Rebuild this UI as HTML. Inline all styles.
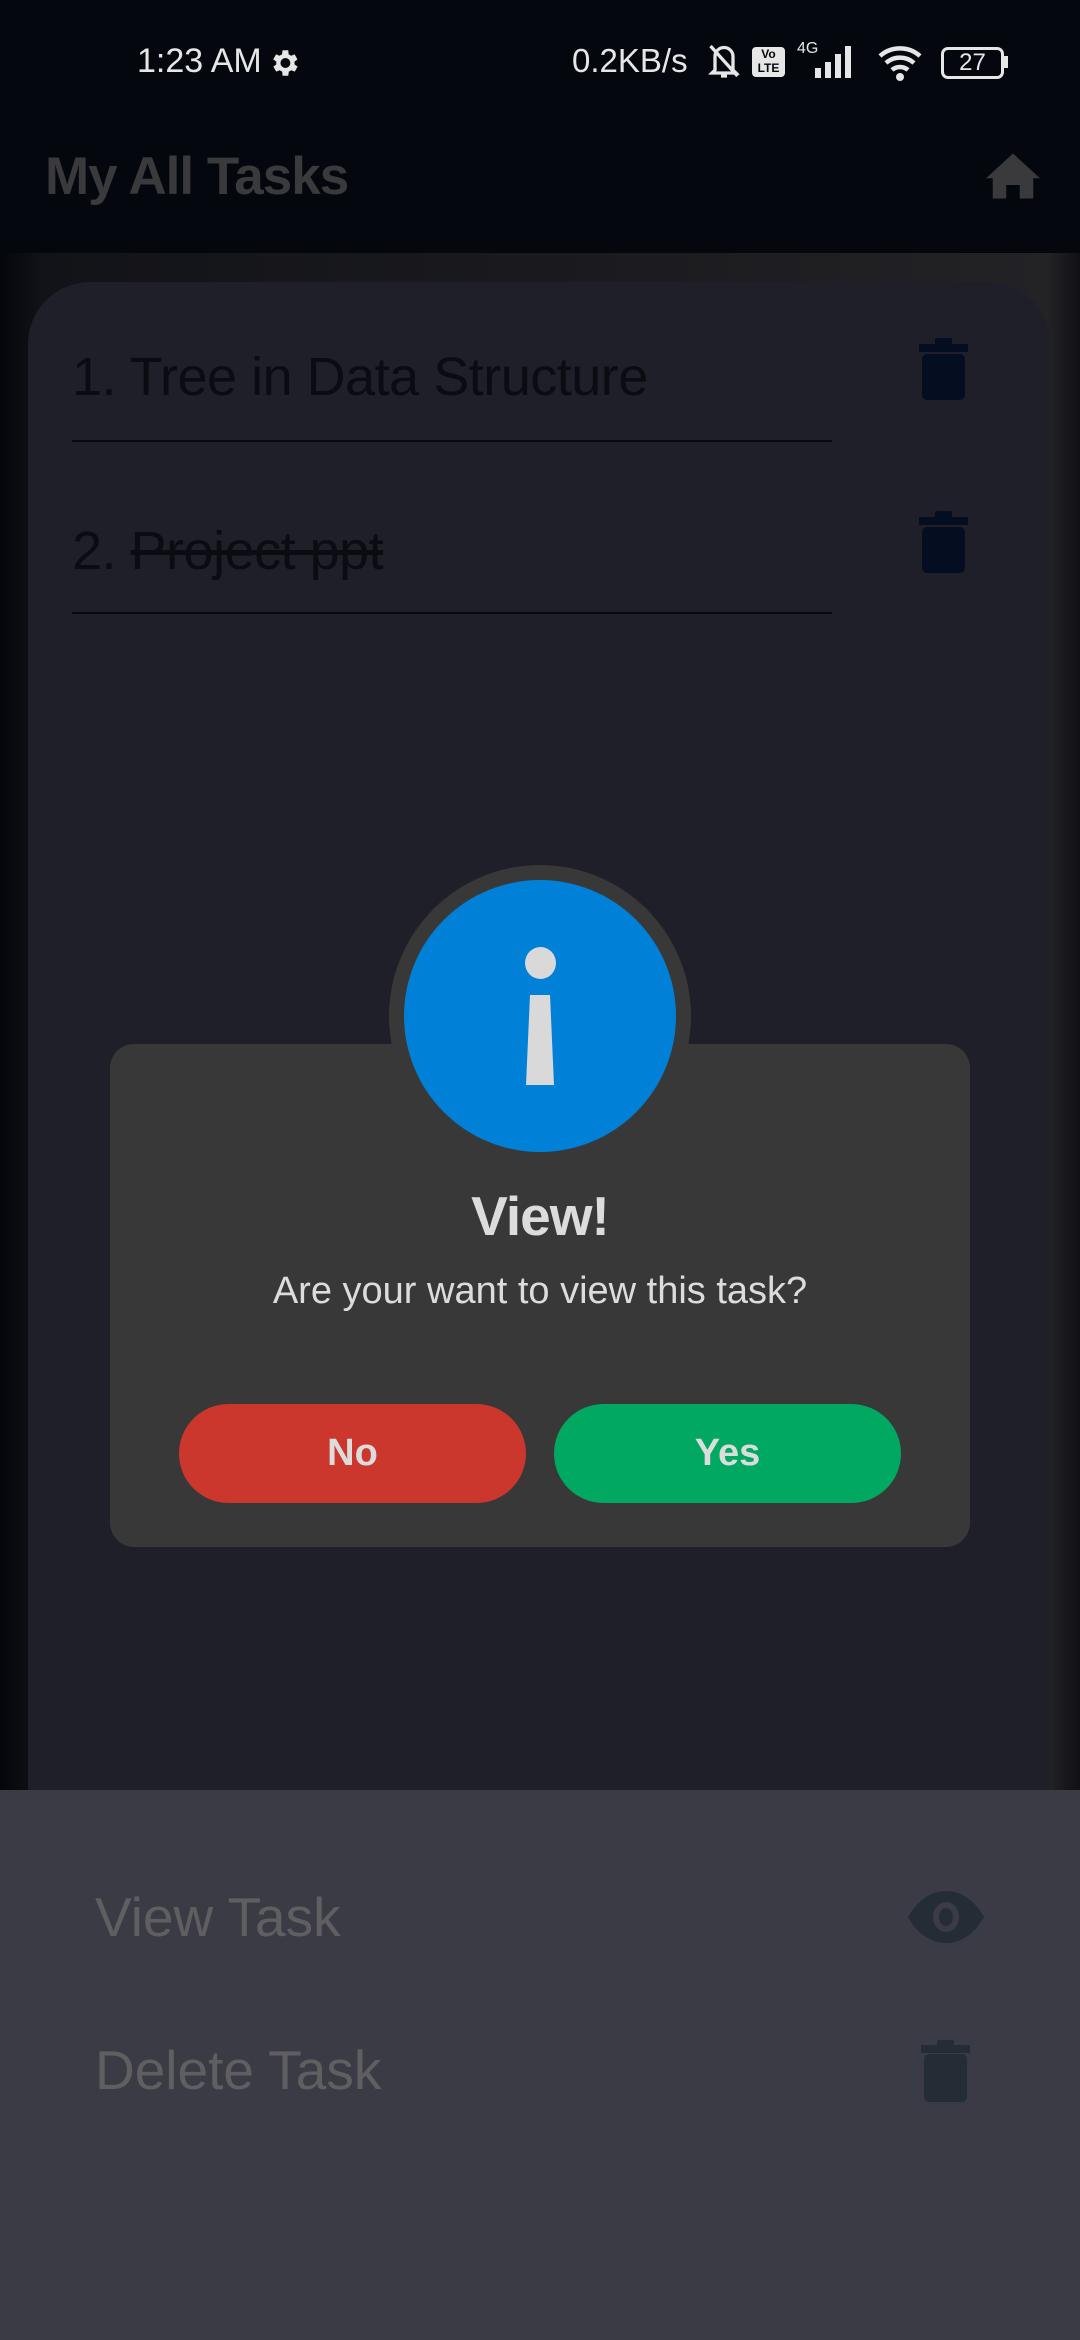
<!DOCTYPE html>
<html><head><meta charset="utf-8"><style>
*{margin:0;padding:0;box-sizing:border-box}
body{width:1080px;height:2340px;position:relative;overflow:hidden;background:#05070f;font-family:"Liberation Sans",Roboto,sans-serif}
.a{position:absolute}
.bg{left:0;top:253px;width:1080px;height:1540px;background:linear-gradient(90deg,#05060c 0%,#121318 4%,#1a1a1e 50%,#232326 97%,#101015 100%)}
.card{left:28px;top:282px;width:1022px;height:1600px;background:#1e1f28;border-radius:62px 62px 0 0}
.t{color:#0b0c12;font-size:54px;white-space:nowrap;letter-spacing:-0.5px}
.line{height:2px;background:#08090e;left:72px;width:760px}
.sheet{left:0;top:1790px;width:1080px;height:550px;background:#3b3b45}
.st{color:#5f5f61;font-size:55px;left:95px;white-space:nowrap}
</style></head><body>
<div class="a" style="left:137px;top:42px;color:#e6e6e6;font-size:34px">1:23 AM</div>
<svg class="a" style="left:267px;top:46px" width="34" height="34" viewBox="0 0 24 24"><path fill="#e6e6e6" d="M19.4 13a7 7 0 000-2l2.1-1.6-2-3.5-2.5 1a7 7 0 00-1.7-1L15 3h-4l-.4 2.9a7 7 0 00-1.7 1l-2.5-1-2 3.5L6.6 11a7 7 0 000 2l-2.1 1.6 2 3.5 2.5-1a7 7 0 001.7 1L11 21h4l.4-2.9a7 7 0 001.7-1l2.5 1 2-3.5zM13 15.5a3.5 3.5 0 110-7 3.5 3.5 0 010 7z"/></svg>
<div class="a" style="left:572px;top:42px;color:#e6e6e6;font-size:33px">0.2KB/s</div>
<svg class="a" style="left:706px;top:40px" width="36" height="42" viewBox="0 0 24 28"><path d="M6 20V11a6 6 0 0112 0v9l2 2H4zM10 24h4M3 4l18 20" stroke="#e6e6e6" stroke-width="2.2" fill="none"/></svg>
<div class="a" style="left:752px;top:47px;width:33px;height:30px;background:#e6e6e6;border-radius:4px;color:#05070f;font-size:12px;font-weight:bold;text-align:center;line-height:14px">Vo<br>LTE</div>
<div class="a" style="left:797px;top:40px;color:#e6e6e6;font-size:16px">4G</div>
<svg class="a" style="left:795px;top:44px" width="66" height="36"><rect x="20" y="24" width="6" height="10" fill="#e6e6e6"/><rect x="30" y="18" width="6" height="16" fill="#e6e6e6"/><rect x="40" y="10" width="6" height="24" fill="#e6e6e6"/><rect x="50" y="2" width="6" height="32" fill="#e6e6e6"/></svg>
<svg class="a" style="left:876px;top:44px" width="50" height="38" viewBox="0 0 50 38"><path d="M4 12a30 30 0 0140 0M10 19a21 21 0 0128 0M16 26a12 12 0 0116 0" stroke="#e6e6e6" stroke-width="4.5" fill="none"/><circle cx="24" cy="33" r="4" fill="#e6e6e6"/></svg>
<div class="a" style="left:941px;top:47px;width:63px;height:32px;border:3px solid #e6e6e6;border-radius:7px;color:#e6e6e6;font-size:24px;line-height:26px;text-align:center">27</div>
<div class="a" style="left:1004px;top:56px;width:4px;height:12px;background:#e6e6e6"></div>

<div class="a" style="left:45px;top:146px;color:#3a3a3c;font-size:53px;font-weight:bold;letter-spacing:-1px">My All Tasks</div>
<svg class="a" style="left:986px;top:153px" width="54" height="46" viewBox="0 0 24 20"><path fill="#3a3a3c" d="M12 0L0 11h3v9h6v-6h6v6h6v-9h3z"/></svg>

<div class="a bg"></div>
<div class="a card"></div>
<div class="a t" style="left:72px;top:346px">1. Tree in Data Structure</div>
<div class="a line" style="top:440px"></div>
<div class="a t" style="left:72px;top:520px">2. <span style="text-decoration:line-through">Project ppt</span></div>
<div class="a line" style="top:612px"></div>
<svg class="a" style="left:919px;top:338px" width="49" height="62" viewBox="0 0 49 62"><rect x="0" y="6" width="49" height="8" fill="#050e20"/><rect x="16" y="0" width="17" height="8" rx="2" fill="#050e20"/><rect x="3" y="16" width="43" height="46" rx="5" fill="#050e20"/></svg>
<svg class="a" style="left:919px;top:511px" width="49" height="62" viewBox="0 0 49 62"><rect x="0" y="6" width="49" height="8" fill="#050e20"/><rect x="16" y="0" width="17" height="8" rx="2" fill="#050e20"/><rect x="3" y="16" width="43" height="46" rx="5" fill="#050e20"/></svg>

<div class="a sheet"></div>
<div class="a st" style="top:1885px">View Task</div>
<div class="a st" style="top:2038px">Delete Task</div>
<svg class="a" style="left:908px;top:1891px" width="76" height="52" viewBox="0 0 76 52"><path fill="#242d36" d="M0 26C10 8 24 0 38 0s28 8 38 26C66 44 52 52 38 52S10 44 0 26z"/><ellipse cx="38" cy="26" rx="13" ry="15" fill="#3b3b45"/><ellipse cx="38" cy="26" rx="7" ry="9" fill="#242d36"/></svg>
<svg class="a" style="left:921px;top:2040px" width="49" height="62" viewBox="0 0 49 62"><rect x="0" y="5" width="49" height="8" fill="#242d36"/><rect x="16" y="0" width="17" height="8" rx="2" fill="#242d36"/><rect x="3" y="14" width="43" height="48" rx="5" fill="#242d36"/></svg>

<div class="a" style="left:110px;top:1044px;width:860px;height:503px;background:#383838;border-radius:24px"></div>
<div class="a" style="left:389px;top:865px;width:302px;height:302px;border-radius:50%;background:#383838"></div>
<div class="a" style="left:404px;top:880px;width:272px;height:272px;border-radius:50%;background:#0080d6"></div>
<div class="a" style="left:525px;top:947px;width:31px;height:32px;border-radius:50%;background:#d9d9d9"></div>
<svg class="a" style="left:524px;top:995px" width="32" height="90"><path d="M6 0H26L30 90H2z" fill="#d9d9d9"/></svg>
<div class="a" style="left:110px;top:1184px;width:860px;text-align:center;color:#dcdcdc;font-size:55px;font-weight:bold;letter-spacing:-1px">View!</div>
<div class="a" style="left:110px;top:1270px;width:860px;text-align:center;color:#dcdcdc;font-size:38px">Are your want to view this task?</div>
<div class="a" style="left:179px;top:1404px;width:347px;height:99px;border-radius:50px;background:#cb372c;color:#dcdcdc;font-size:38px;font-weight:bold;text-align:center;line-height:99px">No</div>
<div class="a" style="left:554px;top:1404px;width:347px;height:99px;border-radius:50px;background:#00a862;color:#dcdcdc;font-size:38px;font-weight:bold;text-align:center;line-height:99px">Yes</div>
</body></html>
